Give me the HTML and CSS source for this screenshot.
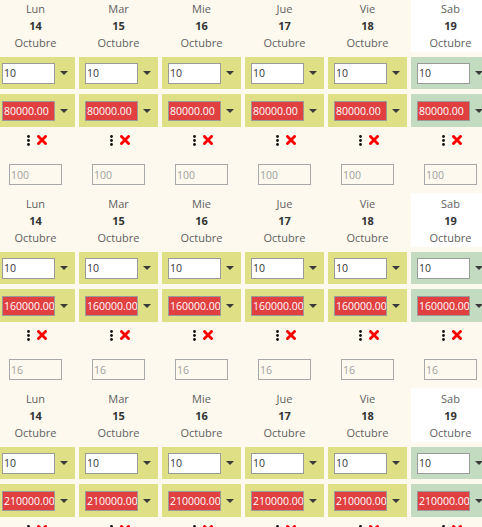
FILE: index.html
```html
<!DOCTYPE html>
<html lang="es">
<head>
<meta charset="utf-8">
<title>Turnos</title>
<link rel="stylesheet" href="styles.css">
</head>
<body>
<div class="sheet" id="sheet"></div>
<script src="app.js"></script>
</body>
</html>
```
FILE: app.js
```js
const days = [["Lun","14"],["Mar","15"],["Mie","16"],["Jue","17"],["Vie","18"],["Sab","19"]];
const weeks = [["80000.00","100"],["160000.00","16"],["210000.00","16"]];
const caret = '<svg class="caret" width="8" height="4" viewBox="0 0 8 4"><path d="M0 0H8L4 4Z" fill="#3a3a3a"/></svg>';
const dots = '<svg class="dots" width="3" height="11" viewBox="0 0 3 11"><circle cx="1.5" cy="1.5" r="1.4"/><circle cx="1.5" cy="5.5" r="1.4"/><circle cx="1.5" cy="9.5" r="1.4"/></svg>';
const cross = '<svg class="cross" width="10" height="10" viewBox="0 0 10 10"><path d="M1.5 1.5L8.5 8.5M8.5 1.5L1.5 8.5" stroke="#f00" stroke-width="2.8" stroke-linecap="square"/></svg>';
const sheet = document.getElementById("sheet");
let html = "";
for (const [amount, qty] of weeks) {
  let h = "", r1 = "", r2 = "", r3 = "", r4 = "";
  days.forEach(([d, n], i) => {
    const sat = i === 5 ? " sat" : "";
    h += `<div class="head${sat}"><div>${d}</div><div class="num">${n}</div><div>Octubre</div></div>`;
    r1 += `<div class="cell${sat}"><input class="box" value="10">${caret}</div>`;
    r2 += `<div class="cell${sat}"><input class="box red" value="${amount}">${caret}</div>`;
    r3 += `<div class="tools">${dots}${cross}</div>`;
    r4 += `<div class="qtycell"><input class="qty" value="${qty}"></div>`;
  });
  html += `<div class="week">${h}${r1}${r2}${r3}${r4}</div>`;
}
sheet.innerHTML = html;
```
FILE: styles.css
```css
html, body {
  margin: 0;
  padding: 0;
  overflow: hidden;
  background: #fdf9ee;
}
body {
  font-family: "Open Sans", "Liberation Sans", sans-serif;
  font-size: 11px;
  color: #555;
}
.sheet {
  margin: -2px 0 0 -4px;
  width: 494px;
}
.week {
  display: grid;
  grid-template-columns: repeat(6, 79px);
  grid-template-rows: 54px 32px 33px 16px 35px;
  column-gap: 4px;
  row-gap: 5px;
  margin-bottom: 5px;
}
.head {
  text-align: center;
  line-height: 17px;
  padding-top: 2px;
  color: #5f5f5f;
}
.head.sat {
  background: #ffffff;
}
.head .num {
  font-weight: 700;
  color: #333;
}
.cell {
  background: #dfdf86;
  display: flex;
  align-items: center;
  padding-left: 6px;
}
.cell.sat {
  background: #c3dcc1;
}
.box {
  box-sizing: border-box;
  width: 53px;
  height: 21px;
  margin: 0;
  padding: 0 0 0 1px;
  border: 1px solid #9a9a9a;
  background: #fff;
  font-family: "Open Sans", "Liberation Sans", sans-serif;
  font-size: 10.5px;
  color: #333;
  outline: none;
}
.box.red {
  background: #e0403f;
  color: #fff;
  height: 20px;
}
.caret {
  margin-left: 5px;
}
.tools {
  display: flex;
  align-items: center;
  justify-content: center;
  gap: 7px;
  padding-left: 2px;
}
.dots {
  fill: #111;
}
.qtycell {
  display: flex;
  justify-content: center;
  align-items: flex-start;
  padding-top: 11px;
}
.qty {
  box-sizing: border-box;
  width: 53px;
  height: 21px;
  margin: 0;
  padding: 0 0 0 1px;
  border: 1px solid #a8a8a8;
  background: transparent;
  font-family: "Open Sans", "Liberation Sans", sans-serif;
  font-size: 10.5px;
  color: #a0a0a0;
  outline: none;
}
```
